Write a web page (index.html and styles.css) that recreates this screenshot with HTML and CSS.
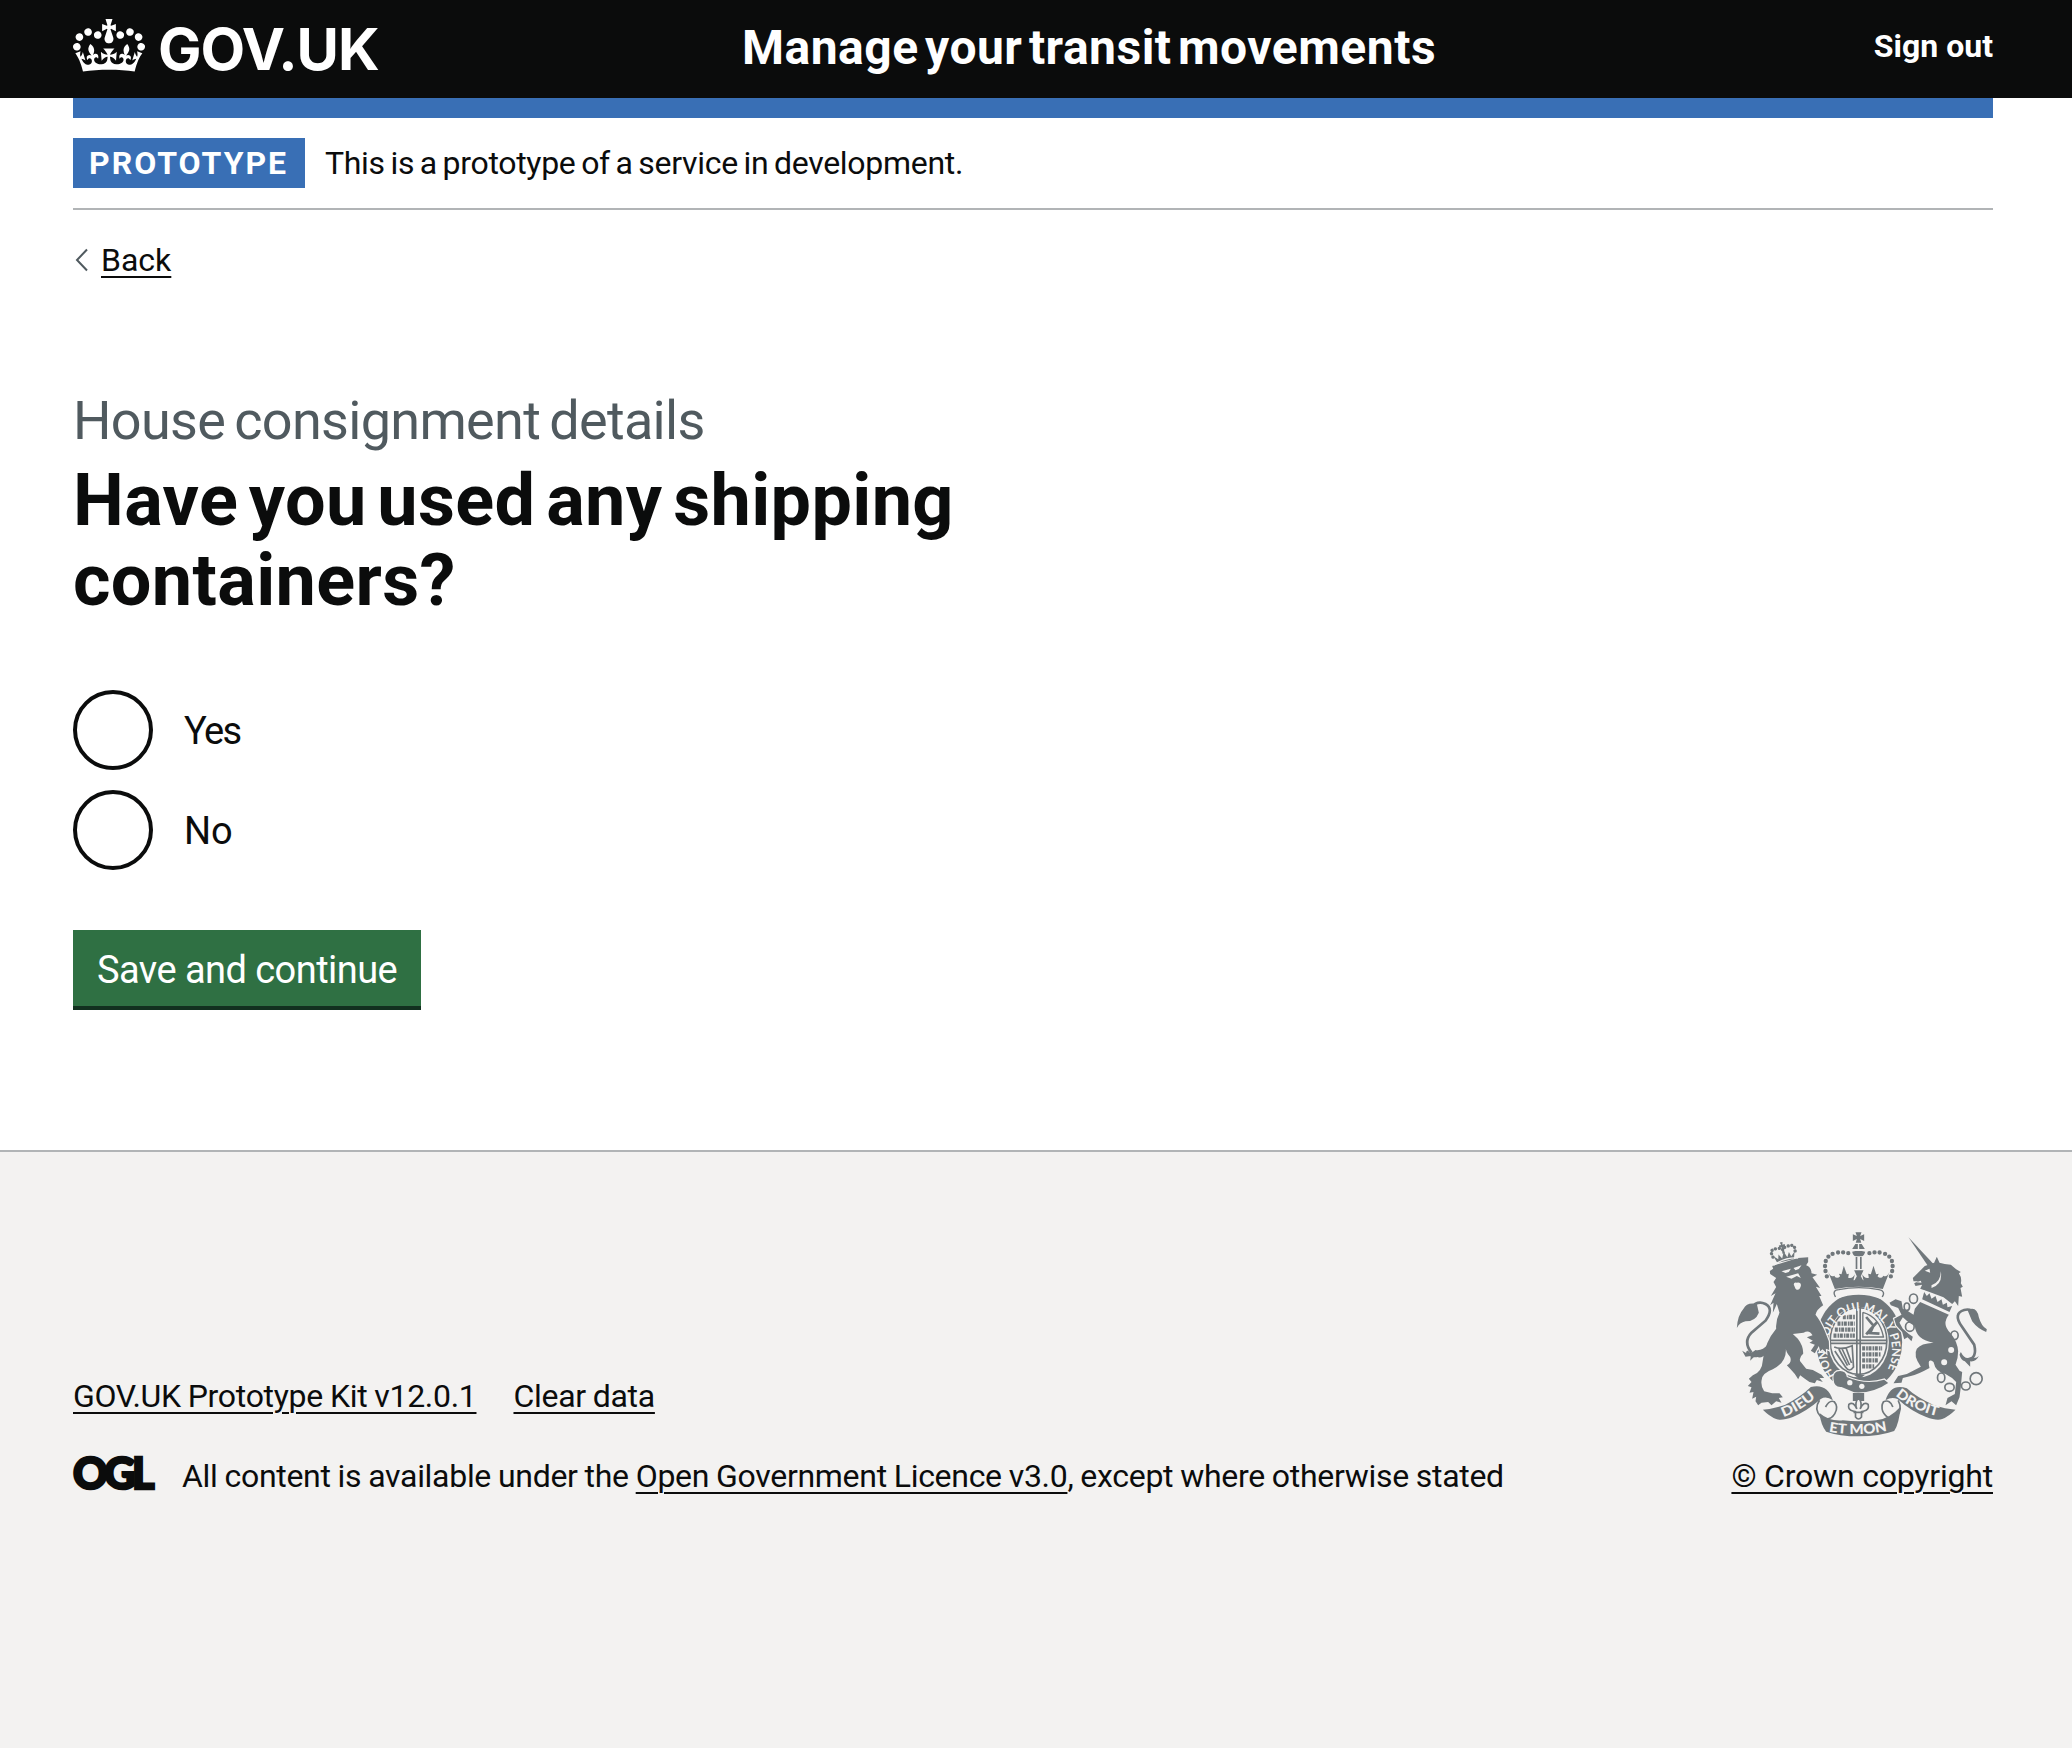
FILE: index.html
```html
<!DOCTYPE html>
<html lang="en">
<head>
<meta charset="utf-8">
<title>Have you used any shipping containers?</title>
<link rel="stylesheet" href="styles.css">
</head>
<body>
<header class="header">
  <div class="container header-row">
    <a class="logo" href="#">
      <svg class="crown" viewBox="0 0 132 97" aria-hidden="true"><path fill="currentColor" fill-rule="evenodd" d="M25 30.2c3.5 1.5 7.7-.2 9.1-3.7 1.5-3.6-.2-7.8-3.9-9.2-3.6-1.4-7.6.3-9.1 3.9-1.4 3.5.3 7.5 3.9 9zM9 39.5c3.6 1.5 7.8-.2 9.2-3.7 1.5-3.6-.2-7.8-3.9-9.1-3.6-1.5-7.6.2-9.1 3.8-1.4 3.5.3 7.5 3.8 9zM4.4 57.2c3.5 1.5 7.7-.2 9.1-3.8 1.5-3.6-.2-7.7-3.9-9.1-3.5-1.5-7.6.3-9.1 3.8-1.4 3.5.3 7.6 3.9 9.1zm38.3-21.4c3.5 1.5 7.7-.2 9.1-3.8 1.5-3.6-.2-7.7-3.9-9.1-3.6-1.5-7.6.3-9.1 3.8-1.3 3.6.4 7.7 3.9 9.1zm64.4-5.6c-3.6 1.5-7.8-.2-9.1-3.7-1.5-3.6.2-7.8 3.8-9.2 3.6-1.4 7.7.3 9.2 3.9 1.3 3.5-.4 7.5-3.9 9zm15.9 9.3c-3.6 1.5-7.7-.2-9.1-3.7-1.5-3.6.2-7.8 3.7-9.1 3.6-1.5 7.7.2 9.2 3.8 1.5 3.5-.3 7.5-3.8 9zm4.7 17.7c-3.6 1.5-7.8-.2-9.2-3.8-1.5-3.6.2-7.7 3.9-9.1 3.6-1.5 7.7.3 9.2 3.8 1.3 3.5-.4 7.6-3.9 9.1zM89.3 35.8c-3.6 1.5-7.8-.2-9.2-3.8-1.4-3.6.2-7.7 3.9-9.1 3.6-1.5 7.7.3 9.2 3.8 1.4 3.6-.3 7.7-3.9 9.1zM69.7 17.7l8.9 4.7V9.3l-8.9 2.8c-.2-.3-.5-.6-.9-.9L72.4 0H59.6l3.5 11.2c-.3.3-.6.5-.9.9l-8.8-2.8v13.1l8.8-4.7c.3.3.6.7.9.9l-5 15.4v.1c-.2.8-.4 1.6-.4 2.4 0 4.1 3.1 7.5 7 8.1h.2c.3 0 .7.1 1 .1.4 0 .7 0 1-.1h.2c4-.6 7.1-4.1 7.1-8.1 0-.8-.1-1.7-.4-2.4V34l-5.1-15.4c.4-.2.7-.6 1-.9zM66 92.8c16.9 0 32.8 1.1 47.1 3.2 4-16.9 8.9-26.7 14-33.5l-9.6-3.4c1 4.9 1.1 7.2 0 10.2-1.5-1.4-3-4.3-4.2-8.7L108.6 76c2.8-2 5-3.2 7.5-3.3-4.4 9.4-10 11.9-13.6 11.2-4.3-.8-6.3-4.6-5.6-7.9 1-4.7 5.7-5.9 8-.5 4.3-8.7-3-11.4-7.6-8.8 7.1-7.2 7.9-13.5 2.1-21.1-8 6.1-8.1 12.3-4.5 20.8-4.7-5.4-12.1-2.5-9.5 6.2 3.4-5.2 7.9-2 7.2 3.1-.6 4.3-6.4 7.8-13.5 7.2-10.3-.9-10.9-8-11.2-13.8 2.5-.5 7.1 1.8 11 7.3L80.2 60c-4.1 4.4-8 5.3-12.3 5.4 1.4-4.4 8-11.6 8-11.6H55.5s6.4 7.2 7.9 11.6c-4.2-.1-8-1-12.3-5.4l1.4 16.4c3.9-5.5 8.5-7.7 10.9-7.3-.3 5.8-.9 12.8-11.1 13.8-7.2.6-12.9-2.9-13.5-7.2-.7-5 3.8-8.3 7.1-3.1 2.7-8.7-4.6-11.6-9.4-6.2 3.7-8.5 3.6-14.7-4.6-20.8-5.8 7.6-5 13.9 2.2 21.1-4.7-2.6-11.9.1-7.7 8.8 2.3-5.5 7.1-4.2 8.1.5.7 3.3-1.3 7.1-5.7 7.9-3.5.7-9-1.8-13.5-11.2 2.5.1 4.7 1.3 7.5 3.3l-4.7-15.4c-1.2 4.4-2.7 7.2-4.3 8.7-1.1-3-.9-5.3 0-10.2l-9.5 3.4c5 6.9 9.9 16.7 14 33.5 14.8-2.1 30.8-3.2 47.7-3.2z"/></svg>
      <span class="logo-text">GOV.UK</span>
    </a>
    <a class="service" href="#">Manage your transit movements</a>
    <a class="signout" href="#">Sign out</a>
  </div>
</header>
<div class="container">
  <div class="blue-bar"></div>
  <div class="phase"><strong class="tag">PROTOTYPE</strong><span class="phase-text">This is a prototype of a service in development.</span></div>
  <a class="back" href="#"><svg class="chevron" viewBox="0 0 14 24" aria-hidden="true"><path d="M12 1.500L2 12l10 10.500" fill="none" stroke="#505a5f" stroke-width="2"/></svg><span>Back</span></a>
  <main class="main">
    <span class="caption">House consignment details</span>
    <h1 class="heading">Have you used any shipping<br>containers?</h1>
    <div class="radios">
      <label class="radio"><span class="dot"></span><span class="yes">Yes</span></label>
      <label class="radio"><span class="dot"></span><span>No</span></label>
    </div>
    <button class="button" type="button">Save and continue</button>
  </main>
</div>
<footer class="footer">
  <div class="container footer-row">
    <div class="meta">
      <div class="links"><a href="#">GOV.UK Prototype Kit v12.0.1</a><a href="#">Clear data</a></div>
      <div class="licence"><span class="ogl">OGL</span><span>All content is available under the <a href="#">Open Government Licence v3.0</a>, except where otherwise stated</span></div>
    </div>
    <a class="copy" href="#">
      <svg class="crest" viewBox="50 35 752 615" aria-hidden="true">
        <defs>
          <path id="belt" d="M346 466A98 117 0 1 1 500 456"/>
          <path id="dieu" d="M192 590Q240 575 296 525"/>
          <path id="etmon" d="M328 634Q417 650 508 630"/>
          <path id="droit" d="M528 525Q580 572 664 589"/>
        </defs>
        <!-- garter and shield -->
        <ellipse class="ink" cx="419" cy="365" rx="129" ry="148"/>
        <ellipse class="paper" cx="417" cy="365" rx="91" ry="106"/>
        <ellipse class="line w5" cx="417" cy="362" rx="85" ry="100"/>
        <path class="line w5" d="M412 262V464M422 262V464M332 360H502M332 369H502"/>
        <path class="line rough" d="M354 310H406M346 328H406M342 346H406M370 290H406M428 384H488M428 402H484M428 420H476M428 438H466"/>
        <path class="line w4" d="M430 276V350H494M430 276Q480 290 492 350"/>
        <path class="line w8" d="M440 290L462 316L452 338L480 340M474 304L454 326L440 342"/>
        <path class="line w5" d="M344 380Q366 390 398 376L402 440Q390 458 378 440L346 392M358 386L384 436M368 386L390 434M380 384L396 428"/>
        <path class="ink" d="M404 464H436L420 476Z"/>
        <text class="motto belt-text"><textPath href="#belt" textLength="480" lengthAdjust="spacingAndGlyphs">HONI SOIT QUI MAL Y PENSE</textPath></text>
        <!-- lion -->
        <g transform="translate(30 15)">
          <path class="ink edge" d="M122 146L121 137L131 130L128 122L205 98L236 96L236 110L230 120Q246 126 246 144L263 148L249 156L272 188L259 184L276 212L269 212L281 240Q262 252 258 268Q272 285 285 315L298 348L299 374L289 370L290 382L279 372L272 378L268 362L256 384L244 376L256 358L240 352L250 346L232 336L249 330Q240 312 222 322L190 326L205 340Q222 362 221 385Q208 395 212 408L230 430L250 434L276 448L284 458L270 458L280 470L262 464L256 474L240 470L226 460L212 450L206 462L196 446L182 430L172 420Q188 412 182 395Q168 380 168 362Q176 408 130 432Q96 444 96 466Q94 486 104 498L128 504L150 504L160 516L148 518L156 532L140 528L126 540L116 530L96 532L86 540L78 528L80 514L68 520L72 500L60 502L66 486L55 482L66 470L58 460L70 450Q98 440 100 405Q106 350 140 310Q138 285 150 262L142 236L130 262L132 232L122 240L138 204L124 212L140 185L132 170L140 158Z"/>
          <path class="cut" d="M156 138L184 130L178 140L168 143ZM192 128L216 120L208 131L198 135ZM170 154L206 144L214 158L202 152L186 160ZM193 178Q192 170 202 172Q216 170 214 182Q208 200 198 190Z"/>
          <path class="line w8" d="M52 378Q70 404 100 382M66 382Q40 350 66 322L108 286Q134 250 108 236Q84 224 66 246"/>
          <path class="ink" d="M22 308Q24 270 42 250Q52 230 82 236L88 262Q78 288 48 288Q30 292 22 308ZM38 376Q60 392 78 374Q98 378 116 356L112 382Q96 404 76 392L62 406L64 392L48 394Z"/>
          <g transform="rotate(-13 162 90)">
            <path class="ink" d="M132 86L139 108H190L197 86L184 98L180 84L172 98L165 80L156 98L148 84L144 98Z"/>
            <path class="line dots" d="M130 88Q122 62 146 66Q160 66 164 74Q168 66 180 66Q206 62 198 88"/>
            <path class="ink" d="M160 50h8l-2 8h7v7h-7l2 20h-8l2-20h-7v-7h7z"/>
          </g>
          <path class="cutline w4" d="M132 120Q164 96 206 98"/>
        </g>
        <!-- unicorn -->
        <g transform="translate(390 15)">
          <path class="ink" d="M177 36L254 118L238 126Z"/>
          <path class="ink" d="M190 158L226 122L254 112L262 94L270 112Q284 116 304 118L320 132L334 140L328 144Q338 158 334 174L340 184L333 188L338 214L328 212L326 242L316 228L308 236L282 216L240 200L212 190L218 178L198 182L194 174L206 168L192 168Z"/>
          <path class="cut" d="M226 136L240 130L242 142ZM246 180Q274 170 274 138Q280 178 246 188ZM200 171L214 166L216 172Z"/>
          <path class="paper" d="M222 194L314 244L304 264L214 226Z"/>
          <path class="ink" d="M218 222L224 200L232 212L240 204L246 220L258 212L264 230L276 222L280 238L292 232L294 246L308 242L300 260Z"/>
          <path class="ink edge" d="M212 230L298 268Q276 296 302 322Q324 348 326 378Q326 400 318 418L330 436L338 440L334 484L330 516L320 540L306 528L288 540L294 518L316 506L320 470Q308 456 288 446Q258 440 252 410Q232 396 240 428Q204 448 184 452L160 458L156 472L132 474L146 452L172 446L214 424Q190 390 202 370Q214 354 252 352Q200 344 196 302L176 290L160 276L150 292L160 310L178 326L190 334L186 348L174 336L164 342L158 320L140 300L134 280L156 268L146 248L124 240L120 232L138 222L156 228L160 250L176 258L192 268L196 250Z"/>
          <path class="cut" d="M296 374a9 9 0 1 0 18 0a9 9 0 1 0-18 0M275 411a9 9 0 1 0 18 0a9 9 0 1 0-18 0"/>
          <path class="line w8" d="M354 404Q384 398 374 358L336 302Q310 264 344 254Q370 246 378 278"/>
          <path class="ink" d="M354 254Q382 240 388 276Q396 304 412 312L410 320Q384 310 368 288ZM334 380Q346 404 362 396Q380 402 388 392Q380 410 362 408L362 424L346 408Q334 404 330 388Z"/>
          <g class="line w5"><ellipse cx="192" cy="220" rx="12" ry="14"/><ellipse cx="172" cy="244" rx="8" ry="11"/><ellipse cx="181" cy="304" rx="13" ry="14"/><ellipse cx="315" cy="330" rx="11" ry="13"/><ellipse cx="275" cy="457" rx="11" ry="14"/><ellipse cx="300" cy="486" rx="14" ry="12"/><ellipse cx="349" cy="482" rx="13" ry="12"/><circle cx="380" cy="460" r="18"/></g>
        </g>
        <!-- buckle end of the garter -->
        <path class="ink edge" d="M342 476Q340 452 362 452Q380 452 382 470Q440 496 494 478L506 488Q460 520 404 516L366 500Q344 502 342 476Z"/>
        <circle class="cut" cx="391" cy="487" r="8"/><circle class="cut" cx="427" cy="498" r="8"/>
        <!-- crown -->
        <path class="paper" d="M338 226L352 205H484L498 226L484 236Q418 210 350 236Z"/>
        <path class="line w4" d="M348 230Q336 210 358 208Q418 196 478 208Q500 212 488 230"/>
        <path class="ink" d="M346 206L326 154Q334 172 344 166Q352 178 362 168L358 160L366 162L373 136L382 162L388 160L386 172Q400 176 406 162L402 180H432L428 162Q436 176 448 172L446 160L454 162L462 136L470 162L478 160L474 168Q484 178 492 166Q502 172 510 154L490 206Q418 192 346 206Z"/>
        <path class="ink" d="M404 182L412 168L404 150H432L424 168L432 182ZM398 94Q417 88 437 94Q434 106 426 108H410Q400 106 398 94Z"/>
        <path class="line beads" d="M322 168Q304 110 346 98Q380 92 398 104M514 168Q532 110 490 98Q456 92 438 104"/>
        <path class="line w5" d="M411 110V146M424 110V146"/>
        <path class="ink" d="M408 36H426L422 47L434 42V62L422 56L426 70L436 86H398L408 70L412 56L400 62V42L412 47Z"/>
        <path class="cutline w4" d="M417 70V90M400 69H434M400 90H436"/>
        <!-- ribbon -->
        <path class="ink" d="M130 568Q160 566 196 554Q246 528 274 500Q324 488 340 540Q320 526 304 536Q262 572 220 590Q186 602 170 596Q150 588 130 568Z"/>
        <path class="ink" d="M708 568Q678 566 642 554Q590 530 562 504Q514 488 498 540Q516 528 534 536Q574 572 620 590Q652 602 668 596Q688 588 708 568Z"/>
        <path class="line w5" d="M300 540Q282 566 304 590Q330 606 346 580Q358 560 344 544Q330 538 318 560M536 540Q550 566 532 590Q506 604 490 574Q484 556 492 544Q512 536 520 560"/>
        <path class="ink" d="M300 578Q330 604 370 600Q418 606 470 600Q510 596 542 560Q540 608 524 632Q480 648 418 648Q360 648 320 634Q304 614 300 578Z"/>
        <text class="motto"><textPath href="#dieu" textLength="114" lengthAdjust="spacingAndGlyphs">DIEU</textPath></text>
        <text class="motto"><textPath href="#etmon" textLength="176" lengthAdjust="spacingAndGlyphs">ET MON</textPath></text>
        <text class="motto"><textPath href="#droit" textLength="142" lengthAdjust="spacingAndGlyphs">DROIT</textPath></text>
        <path class="ink" d="M400 518H434V542H400Z"/>
        <path class="paper line w5" d="M417 532Q404 548 412 566Q402 542 388 552Q384 568 400 572L408 574V590Q417 602 426 590V574L434 572Q450 568 446 552Q432 542 422 566Q430 548 417 532ZM402 576H432"/>
      </svg>
      <span class="copy-text">© Crown copyright</span>
    </a>
  </div>
</footer>
</body>
</html>
```
FILE: styles.css
```css
body { margin: 0; background: #fff; font-family: Roboto, sans-serif; color: #0b0c0c; font-size: 32px; line-height: 40px; }
a { color: inherit; text-decoration-thickness: 2px; text-underline-offset: 5px; }
.container { width: 1920px; margin-left: 73px; }

.header { background: #0b0c0c; color: #fff; height: 98px; }
.header a { text-decoration: none; }
.header-row { display: flex; align-items: flex-start; }
.logo { display: flex; gap: 13px; width: 669px; padding-top: 19px; }
.crown { display: block; width: 72px; height: 53px; }
.logo-text { font: 700 58px/60px Inter, sans-serif; letter-spacing: -1.1px; }
.service { padding-top: 18px; font-size: 48px; line-height: 60px; font-weight: 700; letter-spacing: 0.5px; word-spacing: -6px; }
.signout { margin-left: auto; padding-top: 26px; font-weight: 700; }

.blue-bar { height: 20px; background: #396fb5; }
.phase { display: flex; gap: 20px; padding: 20px 0; border-bottom: 2px solid #b1b4b6; line-height: 50px; }
.phase-text { letter-spacing: -0.3px; word-spacing: -2px; }
.tag { box-sizing: border-box; width: 232px; height: 50px; padding-left: 16px; background: #396fb5; color: #fff; font-weight: 700; line-height: 51px; letter-spacing: 2px; }
.back { display: flex; width: max-content; gap: 12px; align-items: center; margin: 30px 0 0 2px; }
.chevron { width: 14px; height: 24px; }

.main { padding-top: 111px; }
.caption { display: block; font-size: 54px; line-height: 60px; letter-spacing: -0.7px; word-spacing: -3.5px; color: #505a5f; }
.heading { margin: 10px 0 69px; font-size: 72px; line-height: 80px; letter-spacing: 0.35px; word-spacing: -7.5px; }
.radios { display: flex; flex-direction: column; gap: 20px; }
.radio { display: flex; gap: 31px; font-size: 38px; line-height: 83px; height: 80px; }
.yes { letter-spacing: -1.6px; }
.dot { box-sizing: border-box; width: 80px; height: 80px; border: 4px solid #0b0c0c; border-radius: 50%; }
.button { display: block; box-sizing: border-box; width: 348px; height: 80px; margin: 60px 0 0; padding: 4px 0 0 24px; border: 0; border-bottom: 4px solid #12301f; background: #2f7043; color: #fff; font: 38px/50px Roboto, sans-serif; letter-spacing: -0.55px; text-align: left; white-space: nowrap; }

.footer { box-sizing: border-box; height: 598px; margin-top: 140px; padding-top: 80px; border-top: 2px solid #b1b4b6; background: #f3f2f1; }
.footer-row { display: flex; justify-content: space-between; align-items: flex-end; }
.meta { display: flex; flex-direction: column; gap: 40px; letter-spacing: -0.3px; word-spacing: -0.7px; }
.links { display: flex; gap: 37px; }
.licence { display: flex; gap: 27px; }
.ogl { width: 82px; font: 900 43px/34px Lato, sans-serif; letter-spacing: -3.5px; -webkit-text-stroke: 2.5px #0b0c0c; }
.copy { display: flex; flex-direction: column; align-items: flex-end; gap: 19px; letter-spacing: -0.2px; }
.crest { width: 251px; height: 205px; margin-right: 6px; letter-spacing: 0; }

.ink { fill: #70777b; }
.cut, .paper { fill: #f3f2f1; }
.line { fill: none; stroke: #70777b; }
.paper.line { fill: #f3f2f1; }
.cutline { fill: none; stroke: #f3f2f1; }
.edge { stroke: #f3f2f1; stroke-width: 7; paint-order: stroke; }
.w4 { stroke-width: 4; }
.w5 { stroke-width: 5; }
.w8 { stroke-width: 8; }
.dots { stroke-width: 10; stroke-linecap: round; stroke-dasharray: 0 11; }
.beads { stroke-width: 13; stroke-linecap: round; stroke-dasharray: 0 15.5; }
.rough { stroke-width: 13; stroke-dasharray: 9 3 5 2; }
.motto { font: 900 41px Lato, sans-serif; fill: #f3f2f1; }
.belt-text { font-size: 36px; font-weight: 700; }
```
